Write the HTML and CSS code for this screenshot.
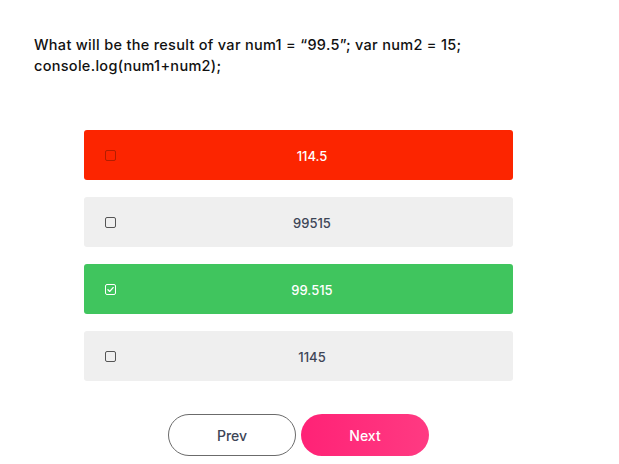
FILE: index.html
```html
<!DOCTYPE html>
<html>
<head>
<meta charset="utf-8">
<link rel="stylesheet" href="styles.css">
</head>
<body>
<div class="quiz">
  <p class="question">What will be the result of var num1 = “99.5”; var num2 = 15; console.log(num1+num2);</p>
  <div class="options">
    <div class="option wrong"><span class="box"></span><span class="label">114.5</span></div>
    <div class="option"><span class="box"></span><span class="label">99515</span></div>
    <div class="option right"><span class="box"><svg viewBox="0 0 10 10" width="9" height="9"><path d="M2.2 5.2 L4.2 7.1 L7.9 2.9" fill="none" stroke="#fff" stroke-width="1.5" stroke-linecap="round" stroke-linejoin="round"/></svg></span><span class="label">99.515</span></div>
    <div class="option"><span class="box"></span><span class="label">1145</span></div>
  </div>
  <div class="nav">
    <button class="btn prev">Prev</button>
    <button class="btn next">Next</button>
  </div>
</div>
</body>
</html>
```
FILE: styles.css
```css
* { box-sizing: border-box; }
body {
  margin: 0;
  background: #fff;
  font-family: Inter, "Open Sans", sans-serif;
}
.quiz {
  padding: 34px 0 0 34px;
}
.question {
  margin: 0;
  width: 470px;
  font-size: 14.5px;
  line-height: 21px;
  font-weight: 500;
  letter-spacing: 0.3px;
  color: #111;
}
.options {
  margin: 54px 0 0 50px;
  width: 429px;
  display: flex;
  flex-direction: column;
  gap: 17px;
}
.option {
  height: 50px;
  display: flex;
  align-items: center;
  padding: 2px 5px 0 21px;
  background: #efefef;
  border-radius: 3px;
  color: #3d4556;
  font-size: 13px;
  font-weight: 450;
}
.option.wrong { background: #fc2500; color: #fff; }
.option.right { background: #40c55e; color: #fff; }
.box {
  width: 11px;
  height: 11px;
  margin-top: -2px;
  border: 1.5px solid #555;
  border-radius: 2px;
  display: flex;
  align-items: center;
  justify-content: center;
}
.wrong .box { border-color: rgba(90, 20, 0, 0.45); }
.right .box { border-color: #fff; }
.label {
  flex: 1;
  text-align: center;
}
.nav {
  margin: 33px 0 0 50px;
  width: 429px;
  display: flex;
  justify-content: center;
  gap: 5px;
}
.btn {
  width: 128px;
  height: 42px;
  border-radius: 21px;
  font-family: inherit;
  font-size: 14px;
  font-weight: 450;
  cursor: pointer;
}
.prev {
  background: #fff;
  border: 1px solid #6b6b6b;
  color: #3d4556;
}
.next {
  border: none;
  background: linear-gradient(90deg, #ff2276, #ff3a82);
  color: #fff;
}
```
